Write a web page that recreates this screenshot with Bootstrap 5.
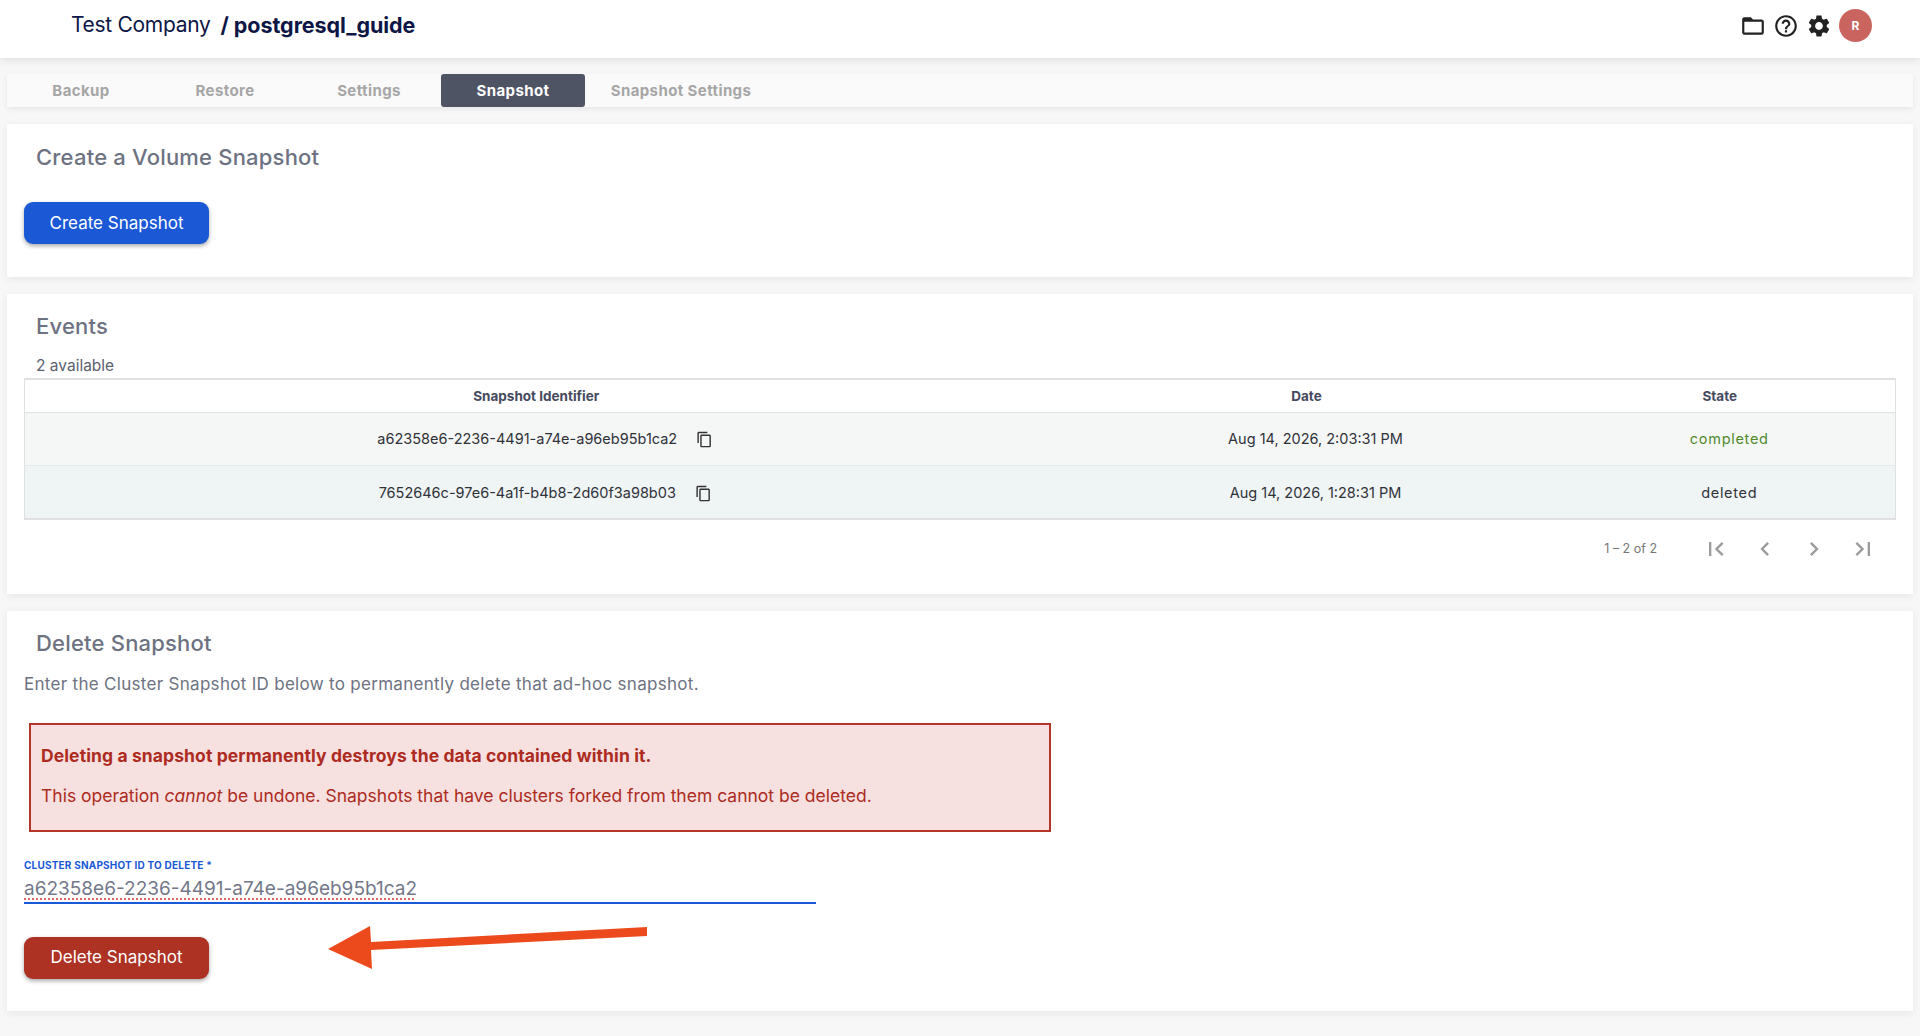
<!DOCTYPE html>
<html lang="en">
<head>
    <meta charset="UTF-8">
    <meta name="viewport" content="width=device-width, initial-scale=1.0">
    <title>postgresql_guide - Snapshot</title>
    <link href="https://cdn.jsdelivr.net/npm/bootstrap@5.3.0/dist/css/bootstrap.min.css" rel="stylesheet">
    <style>
        body {
            background-color: #f7f7f7;
            font-family: "Inter", "Noto Sans", sans-serif;
            color: #30323a;
            height: 1036px;
            overflow: hidden;
        }
        .top-bar {
            height: 58px;
            background: #fff;
            box-shadow: 0 2px 8px rgba(0, 0, 0, .1);
            padding: 0 48px 0 71px;
            color: #0d1645;
        }
        .brand-line { padding-bottom: 8px; }
        .org-name { font-size: 21px; letter-spacing: -.3px; }
        .db-name { font-size: 21.5px; font-weight: 700; margin-left: 10px; letter-spacing: -.05px; }
        .top-icons { gap: 7px; color: #222; padding-bottom: 7px; }
        .user-dot {
            width: 33px;
            height: 33px;
            border-radius: 50%;
            background: #c9645f;
            color: #fff;
            font-size: 12px;
            font-weight: 700;
        }
        .page-wrap { padding: 16px 7px 0; }
        .tab-bar {
            height: 33px;
            background: #fafafa;
            box-shadow: 0 2px 6px rgba(0, 0, 0, .07);
            margin-bottom: 17px;
            padding-left: 2px;
        }
        .tab-bar .nav-link {
            width: 144px;
            height: 33px;
            padding: 1px 0 0;
            display: flex;
            align-items: center;
            justify-content: center;
            font-size: 15px;
            letter-spacing: .4px;
            font-weight: 700;
            color: #a6a6a6;
            border-radius: 3px;
        }
        .tab-bar .nav-link.active { background: #4f5465; color: #fff; }
        .tab-bar .nav-link.tab-wide { width: 192px; }
        .panel {
            border: 0;
            border-radius: 0;
            box-shadow: 0 2px 8px rgba(0, 0, 0, .07);
            margin-bottom: 17px;
            padding: 0 17px;
        }
        .panel-title {
            font-size: 22px;
            letter-spacing: .2px;
            font-weight: 500;
            line-height: 26px;
            color: #6d7282;
            margin: 0;
            padding: 20px 0 0 12px;
        }
        .panel-title.tight-title { padding-top: 19px; }
        .events-title { margin-bottom: 1px; }
        .act-btn {
            width: 185px;
            height: 42px;
            padding: 0;
            border: 0;
            border-radius: 9px;
            font-size: 17px;
            color: #fff;
            box-shadow: 0 2px 4px rgba(0, 0, 0, .35);
        }
        .act-blue, .act-blue:hover { background: #1a58d6; color: #fff; padding-top: 1px; }
        .act-red, .act-red:hover { background: #ad3224; color: #fff; }
        .create-row { margin-bottom: 9px; }
        .count-line { font-size: 15.5px; color: #5c6070; padding-left: 12px; line-height: 18px; margin-top: 17px; }
        .snap-table {
            width: 100%;
            table-layout: fixed;
            margin: 3px 0 0;
            border: 1px solid #dfe1e1;
            border-top-width: 2px;
            border-bottom-width: 2px;
            font-size: 14.5px;
        }
        .snap-table th {
            height: 33px;
            padding: 0 18px 0 0;
            font-size: 13.5px;
            font-weight: 700;
            color: #454a5e;
            text-align: center;
            vertical-align: middle;
            background: #fff;
        }
        .snap-table th:first-child { padding-right: 15px; }
        .snap-table th:last-child { padding-right: 24px; }
        .snap-table td {
            height: 53.5px;
            padding: 1px 0 0;
            text-align: center;
            vertical-align: middle;
            color: #30323a;
            border-color: #e6e9e9;
        }
        .snap-table td:first-child { padding-left: 3px; }
        .snap-table td:last-child { padding-right: 5px; letter-spacing: .7px; }
        .snap-table .row-a td { background: #f5f7f6; }
        .snap-table .row-b td { background: #eff4f4; border-bottom: 0; }
        .snap-table td.state-ok { color: #4f8a2d; }
        .copy-ico { margin-left: 19px; vertical-align: -4px; color: #333; }
        .pager { height: 58px; padding-right: 19px; color: #9b9b9b; margin-bottom: 16px; }
        .pager-text { font-size: 12.5px; margin-right: 45px; color: #777; }
        .pager svg { display: block; margin-left: 21px; }
        .pager svg:first-of-type { margin-left: 0; }
        .help-text { font-size: 17px; letter-spacing: .3px; color: #6d7282; padding-top: 18px; line-height: 20px; }
        .warn-box {
            width: 1022px;
            height: 109px;
            margin: 29.3px 0 0 5px;
            padding: 0 10px 4px;
            background: #f6e0e0;
            border: 2px solid #b5352b;
            color: #ad2b20;
            font-size: 17.5px;
            border-radius: 0;
            display: flex;
            flex-direction: column;
            justify-content: center;
            gap: 19px;
        }
        .warn-box p { margin: 0; line-height: 21px; }
        .warn-box .warn-head { letter-spacing: .1px; }
        .field-wrap { width: 792px; margin-top: 27px; }
        .field-wrap label {
            display: block;
            margin: 0 0 2.5px;
            font-size: 10px;
            font-weight: 700;
            line-height: 12px;
            text-transform: uppercase;
            color: #1a58d6;
            letter-spacing: .2px;
        }
        .field-wrap .form-control {
            height: 30px;
            padding: 2px 0 0;
            border: 0;
            border-bottom: 2px solid #1a58d6;
            border-radius: 0;
            font-size: 19px;
            color: #73778a;
            box-shadow: none;
            background: transparent;
            text-decoration: underline dotted #e0645a;
            text-underline-offset: 3px;
        }
        .del-btn { margin-top: 33px; }
        .arrow-mark { position: absolute; left: 304px; top: 311px; }
    </style>
</head>
<body>
    <header class="top-bar d-flex align-items-center justify-content-between">
        <div class="brand-line d-flex align-items-center">
            <span class="org-name">Test Company</span>
            <span class="db-name">/ postgresql_guide</span>
        </div>
        <div class="top-icons d-flex align-items-center">
            <svg width="26" height="26" viewBox="0 0 24 24" fill="currentColor"><path d="M20 6h-8l-2-2H4c-1.1 0-1.99.9-1.99 2L2 18c0 1.1.9 2 2 2h16c1.1 0 2-.9 2-2V8c0-1.1-.9-2-2-2zm0 12H4V8h16v10z"/></svg>
            <svg width="26" height="26" viewBox="0 0 24 24" fill="currentColor"><path d="M11 18h2v-2h-2v2zm1-16C6.48 2 2 6.48 2 12s4.48 10 10 10 10-4.48 10-10S17.52 2 12 2zm0 18c-4.41 0-8-3.59-8-8s3.59-8 8-8 8 3.59 8 8-3.59 8-8 8zm0-14c-2.21 0-4 1.79-4 4h2c0-1.1.9-2 2-2s2 .9 2 2c0 2-3 1.75-3 5h2c0-2.25 3-2.5 3-5 0-2.21-1.79-4-4-4z"/></svg>
            <svg width="26" height="26" viewBox="0 0 24 24" fill="currentColor"><path d="M19.14 12.94c.04-.3.06-.61.06-.94 0-.32-.02-.64-.07-.94l2.03-1.58c.18-.14.23-.41.12-.61l-1.92-3.32c-.12-.22-.37-.29-.59-.22l-2.39.96c-.5-.38-1.03-.7-1.62-.94l-.36-2.54c-.04-.24-.24-.41-.48-.41h-3.84c-.24 0-.43.17-.47.41l-.36 2.54c-.59.24-1.13.57-1.62.94l-2.39-.96c-.22-.08-.47 0-.59.22L2.74 8.87c-.12.21-.08.47.12.61l2.03 1.58c-.05.3-.09.63-.09.94s.02.64.07.94l-2.03 1.58c-.18.14-.23.41-.12.61l1.92 3.32c.12.22.37.29.59.22l2.39-.96c.5.38 1.03.7 1.62.94l.36 2.54c.05.24.24.41.48.41h3.84c.24 0 .44-.17.47-.41l.36-2.54c.59-.24 1.13-.56 1.62-.94l2.39.96c.22.08.47 0 .59-.22l1.92-3.32c.12-.22.07-.47-.12-.61l-2.01-1.58zM12 15.6c-1.98 0-3.6-1.62-3.6-3.6s1.62-3.6 3.6-3.6 3.6 1.62 3.6 3.6-1.62 3.6-3.6 3.6z"/></svg>
            <div class="user-dot d-flex align-items-center justify-content-center">R</div>
        </div>
    </header>

    <div class="page-wrap">
        <ul class="nav tab-bar">
            <li class="nav-item"><a class="nav-link" href="#">Backup</a></li>
            <li class="nav-item"><a class="nav-link" href="#">Restore</a></li>
            <li class="nav-item"><a class="nav-link" href="#">Settings</a></li>
            <li class="nav-item"><a class="nav-link active" href="#">Snapshot</a></li>
            <li class="nav-item"><a class="nav-link tab-wide" href="#">Snapshot Settings</a></li>
        </ul>

        <!-- Create -->
        <section class="card panel">
            <h5 class="panel-title">Create a Volume Snapshot</h5>
            <div class="pt-4 pb-4 mt-2 create-row">
                <button type="button" class="btn act-btn act-blue">Create Snapshot</button>
            </div>
        </section>

        <!-- Events -->
        <section class="card panel">
            <h5 class="panel-title tight-title events-title">Events</h5>
            <div class="count-line">2 available</div>
            <table class="table snap-table">
                <colgroup>
                    <col style="width: 1038px">
                    <col style="width: 506px">
                    <col>
                </colgroup>
                <thead>
                    <tr>
                        <th>Snapshot Identifier</th>
                        <th>Date</th>
                        <th>State</th>
                    </tr>
                </thead>
                <tbody>
                    <tr class="row-a">
                        <td>a62358e6-2236-4491-a74e-a96eb95b1ca2<svg class="copy-ico" width="17" height="17" viewBox="0 0 24 24" fill="currentColor"><path d="M16 1H4c-1.1 0-2 .9-2 2v14h2V3h12V1zm3 4H8c-1.1 0-2 .9-2 2v14c0 1.1.9 2 2 2h11c1.1 0 2-.9 2-2V7c0-1.1-.9-2-2-2zm0 16H8V7h11v14z"/></svg></td>
                        <td>Aug 14, 2026, 2:03:31 PM</td>
                        <td class="state-ok">completed</td>
                    </tr>
                    <tr class="row-b">
                        <td>7652646c-97e6-4a1f-b4b8-2d60f3a98b03<svg class="copy-ico" width="17" height="17" viewBox="0 0 24 24" fill="currentColor"><path d="M16 1H4c-1.1 0-2 .9-2 2v14h2V3h12V1zm3 4H8c-1.1 0-2 .9-2 2v14c0 1.1.9 2 2 2h11c1.1 0 2-.9 2-2V7c0-1.1-.9-2-2-2zm0 16H8V7h11v14z"/></svg></td>
                        <td>Aug 14, 2026, 1:28:31 PM</td>
                        <td>deleted</td>
                    </tr>
                </tbody>
            </table>
            <div class="pager d-flex align-items-center justify-content-end">
                <span class="pager-text">1 – 2 of 2</span>
                <svg width="28" height="28" viewBox="0 0 24 24" fill="currentColor"><path d="M18.41 16.59L13.82 12l4.59-4.59L17 6l-6 6 6 6zM6 6h2v12H6z"/></svg>
                <svg width="28" height="28" viewBox="0 0 24 24" fill="currentColor"><path d="M15.41 7.41L14 6l-6 6 6 6 1.41-1.41L10.83 12z"/></svg>
                <svg width="28" height="28" viewBox="0 0 24 24" fill="currentColor"><path d="M10 6L8.59 7.41 13.17 12l-4.58 4.59L10 18l6-6z"/></svg>
                <svg width="28" height="28" viewBox="0 0 24 24" fill="currentColor"><path d="M5.59 7.41L10.18 12l-4.59 4.59L7 18l6-6-6-6zM16 6h2v12h-2z"/></svg>
            </div>
        </section>

        <!-- Delete -->
        <section class="card panel position-relative pb-4">
            <h5 class="panel-title tight-title">Delete Snapshot</h5>
            <div class="help-text">Enter the Cluster Snapshot ID below to permanently delete that ad-hoc snapshot.</div>
            <div class="alert warn-box" role="alert">
                <p class="fw-bold warn-head">Deleting a snapshot permanently destroys the data contained within it.</p>
                <p>This operation <em>cannot</em> be undone. Snapshots that have clusters forked from them cannot be deleted.</p>
            </div>
            <div class="field-wrap">
                <label for="snapId">Cluster Snapshot ID to delete *</label>
                <input type="text" class="form-control" id="snapId" value="a62358e6-2236-4491-a74e-a96eb95b1ca2">
            </div>
            <div class="del-btn pb-2">
                <button type="button" class="btn act-btn act-red">Delete Snapshot</button>
            </div>
            <svg class="arrow-mark" width="340" height="60" viewBox="0 0 340 60">
                <polygon fill="#ec4a1c" points="17,27 59,4 60,20 336,5 336,14 60,28 61,47"/>
            </svg>
        </section>
    </div>
    <script src="https://cdn.jsdelivr.net/npm/bootstrap@5.3.0/dist/js/bootstrap.bundle.min.js"></script>
</body>
</html>
